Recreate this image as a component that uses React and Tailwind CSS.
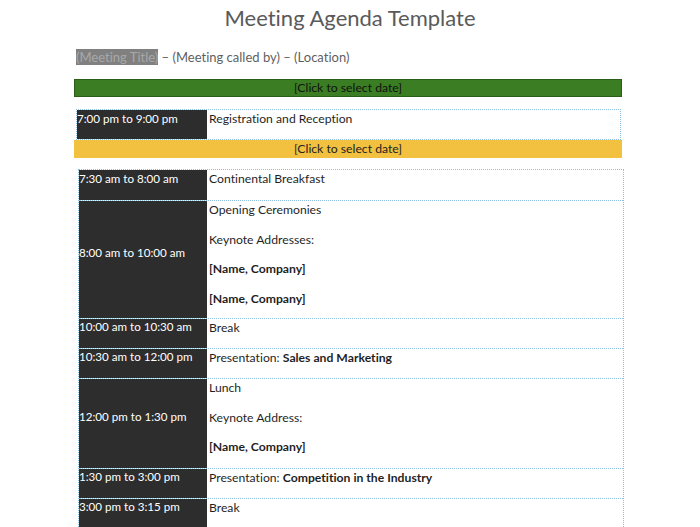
const rows = [
  { h: "h-[30px]", time: "7:30 am to 8:00 am", items: [{ t: "Continental Breakfast" }] },
  {
    h: "h-[118px]",
    time: "8:00 am to 10:00 am",
    items: [
      { t: "Opening Ceremonies" },
      { t: "Keynote Addresses:" },
      { b: "[Name, Company]" },
      { b: "[Name, Company]" },
    ],
  },
  { h: "h-[30px]", time: "10:00 am to 10:30 am", items: [{ t: "Break" }] },
  { h: "h-[30px]", time: "10:30 am to 12:00 pm", items: [{ t: "Presentation: ", b: "Sales and Marketing" }] },
  {
    h: "h-[90px]",
    time: "12:00 pm to 1:30 pm",
    items: [{ t: "Lunch" }, { t: "Keynote Address:" }, { b: "[Name, Company]" }],
  },
  { h: "h-[30px]", time: "1:30 pm to 3:00 pm", items: [{ t: "Presentation: ", b: "Competition in the Industry" }] },
  { h: "h-[30px]", time: "3:00 pm to 3:15 pm", items: [{ t: "Break" }] },
];

function Row({ h, time, items, first }) {
  return (
    <div className={`flex ${h} ${first ? "" : "border-t border-dotted border-[#8cbfe0]"}`}>
      <div className="w-[128px] shrink-0 bg-[#2d2d2d] text-white text-[11.6px] flex items-center pb-[14px] leading-[15px]">
        {time}
      </div>
      <div className="flex-1 pl-[2px] pt-px">
        {items.map((it, i) => (
          <p key={i} className="leading-[15px] mb-[14.5px]">
            {it.t}
            {it.b && <span className="font-bold">{it.b}</span>}
          </p>
        ))}
      </div>
    </div>
  );
}

export default function App() {
  return (
    <div className="w-[700px] h-[527px] overflow-hidden bg-white text-[#1f1f1f] font-['Lato',sans-serif] text-[12.2px] [font-variant-ligatures:no-common-ligatures]">
      <h1 className="text-center text-[22px] text-[#5a5a5a] pt-[4px] leading-[28px]">
        Meeting Agenda Template
      </h1>
      <p className="ml-[76px] mt-[17px] text-[13px] leading-[17px] text-[#5f5f5f]">
        <span className="bg-[#808080] text-[#a8a8a8]">(Meeting Title)</span> – (Meeting called by) – (Location)
      </p>

      <div className="ml-[74px] w-[548px] mt-[13px]">
        <div className="h-[18px] bg-[#3b7d23] border border-[#2b5f19] text-center leading-[16px] text-[#111]">
          [Click to select date]
        </div>

        <div className="mt-[12px] ml-[2px] w-[545px] flex border border-dotted border-[#8cbfe0]">
          <div className="w-[130px] shrink-0 bg-[#2d2d2d] text-white text-[11.6px] h-[29px] leading-[15px] pt-px">
            7:00 pm to 9:00 pm
          </div>
          <div className="flex-1 pl-[2px] pt-px leading-[15px]">Registration and Reception</div>
        </div>

        <div className="h-[18px] bg-[#f2c13f] text-center leading-[18px] text-[#222]">
          [Click to select date]
        </div>

        <div className="mt-[11px] ml-[4px] w-[546px] border border-dotted border-[#8cbfe0]">
          {rows.map((r, i) => (
            <Row key={i} {...r} first={i === 0} />
          ))}
        </div>
      </div>
    </div>
  );
}
